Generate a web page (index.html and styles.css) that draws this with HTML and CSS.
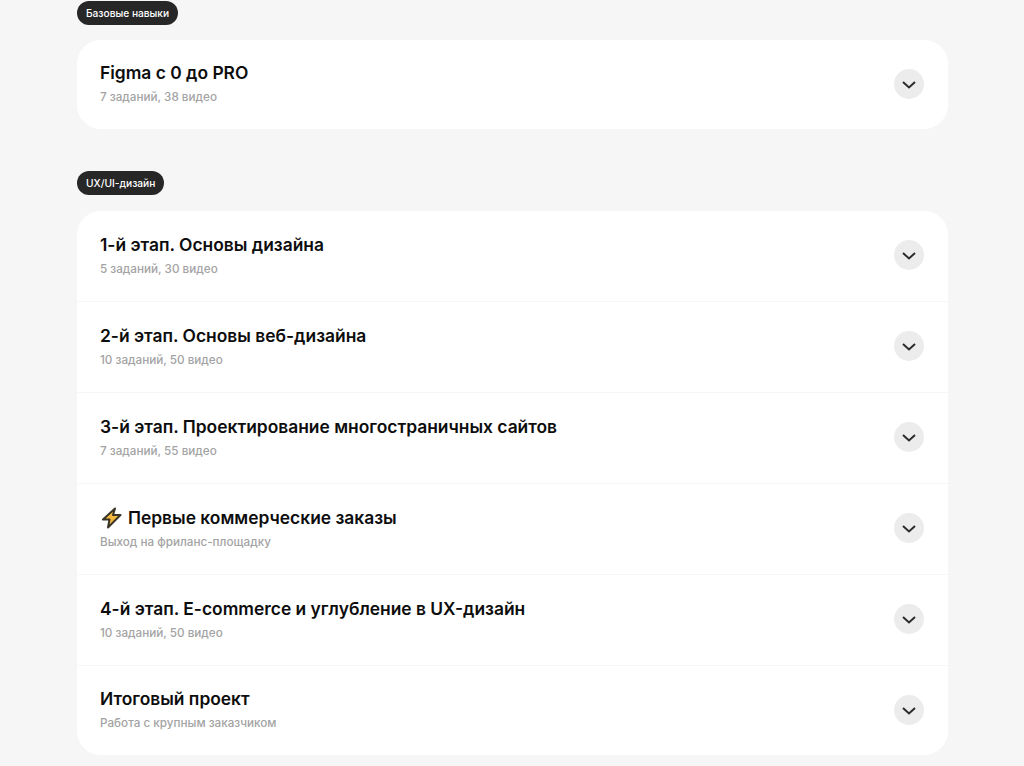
FILE: index.html
```html
<!DOCTYPE html>
<html lang="ru">
<head>
    <meta charset="UTF-8">
    <meta name="viewport" content="width=device-width, initial-scale=1.0">
    <title>Программа курса</title>
    <link rel="stylesheet" href="styles.css">
</head>
<body>
    <section class="section section-first">
        <span class="tag">Базовые навыки</span>
        <div class="card">
            <div class="row row-single">
                <div class="row-text">
                    <h3 class="row-title">Figma с 0 до PRO</h3>
                    <p class="row-sub">7 заданий, 38 видео</p>
                </div>
                <button class="toggle" aria-label="Открыть"><svg width="14" height="9" viewBox="0 0 14 9"><path d="M1 2 7 7.500 13 2"/></svg></button>
            </div>
        </div>
    </section>

    <section class="section">
        <span class="tag">UX/UI-дизайн</span>
        <div class="card">
            <div class="row">
                <div class="row-text">
                    <h3 class="row-title">1-й этап. Основы дизайна</h3>
                    <p class="row-sub">5 заданий, 30 видео</p>
                </div>
                <button class="toggle" aria-label="Открыть"><svg width="14" height="9" viewBox="0 0 14 9"><path d="M1 2 7 7.500 13 2"/></svg></button>
            </div>
            <div class="row">
                <div class="row-text">
                    <h3 class="row-title">2-й этап. Основы веб-дизайна</h3>
                    <p class="row-sub">10 заданий, 50 видео</p>
                </div>
                <button class="toggle" aria-label="Открыть"><svg width="14" height="9" viewBox="0 0 14 9"><path d="M1 2 7 7.500 13 2"/></svg></button>
            </div>
            <div class="row">
                <div class="row-text">
                    <h3 class="row-title">3-й этап. Проектирование многостраничных сайтов</h3>
                    <p class="row-sub">7 заданий, 55 видео</p>
                </div>
                <button class="toggle" aria-label="Открыть"><svg width="14" height="9" viewBox="0 0 14 9"><path d="M1 2 7 7.500 13 2"/></svg></button>
            </div>
            <div class="row">
                <div class="row-text">
                    <h3 class="row-title"><svg class="bolt" width="22" height="22" viewBox="0 0 22 22"><path d="M15 1.500 3 12.500h6.500L8 20.500 20.500 8H13z"/></svg>Первые коммерческие заказы</h3>
                    <p class="row-sub">Выход на фриланс-площадку</p>
                </div>
                <button class="toggle" aria-label="Открыть"><svg width="14" height="9" viewBox="0 0 14 9"><path d="M1 2 7 7.500 13 2"/></svg></button>
            </div>
            <div class="row">
                <div class="row-text">
                    <h3 class="row-title">4-й этап. E-commerce и углубление в UX-дизайн</h3>
                    <p class="row-sub">10 заданий, 50 видео</p>
                </div>
                <button class="toggle" aria-label="Открыть"><svg width="14" height="9" viewBox="0 0 14 9"><path d="M1 2 7 7.500 13 2"/></svg></button>
            </div>
            <div class="row">
                <div class="row-text">
                    <h3 class="row-title">Итоговый проект</h3>
                    <p class="row-sub">Работа с крупным заказчиком</p>
                </div>
                <button class="toggle" aria-label="Открыть"><svg width="14" height="9" viewBox="0 0 14 9"><path d="M1 2 7 7.500 13 2"/></svg></button>
            </div>
        </div>
    </section>
</body>
</html>
```

FILE: styles.css
```css
html, body {
    height: 766px;
    overflow: hidden;
}
body {
    margin: 0;
    padding: 1px 76px 0 77px;
    background-color: #f6f6f6;
    font-family: Inter, "Noto Sans", sans-serif;
    color: #0d0d0d;
}

.section {
    margin-top: 42px;
}
.section-first {
    margin-top: 0;
}

.tag {
    display: block;
    width: fit-content;
    height: 24px;
    padding: 0 9px;
    border-radius: 12px;
    background-color: #272727;
    color: #fff;
    font-size: 10.2px;
    font-weight: 500;
    line-height: 24px;
}

.card {
    margin-top: 15px;
    background-color: #fff;
    border-radius: 24px;
}
.section + .section .card {
    margin-top: 16px;
}

/* Строки программы */
.row {
    display: flex;
    align-items: center;
    justify-content: space-between;
    box-sizing: border-box;
    height: 91px;
    padding: 0 24px 0 23px;
    border-bottom: 1px solid #f6f6f6;
}
.row:last-child {
    border-bottom: none;
    height: 89px;
}
.row-text {
    padding-bottom: 3px;
}
.row-title {
    display: flex;
    align-items: center;
    height: 24px;
    margin: 0;
    font-size: 17.4px;
    font-weight: 600;
    line-height: 24px;
}
.row-sub {
    margin: 4px 0 0;
    color: #a3a3a3;
    font-size: 11.7px;
    font-weight: 500;
    line-height: 16px;
}
.bolt {
    margin-right: 6px;
}
.bolt path {
    fill: #f5b93f;
    stroke: #3a3526;
    stroke-width: 2;
    stroke-linejoin: round;
}

.toggle {
    display: flex;
    align-items: center;
    justify-content: center;
    width: 30px;
    height: 30px;
    margin-bottom: 2px;
    padding: 0;
    border: none;
    border-radius: 50%;
    background-color: #ececec;
}
.row:last-child .toggle {
    margin-bottom: 1px;
}
.toggle path {
    fill: none;
    stroke: #2b2b2b;
    stroke-width: 2;
}
```
